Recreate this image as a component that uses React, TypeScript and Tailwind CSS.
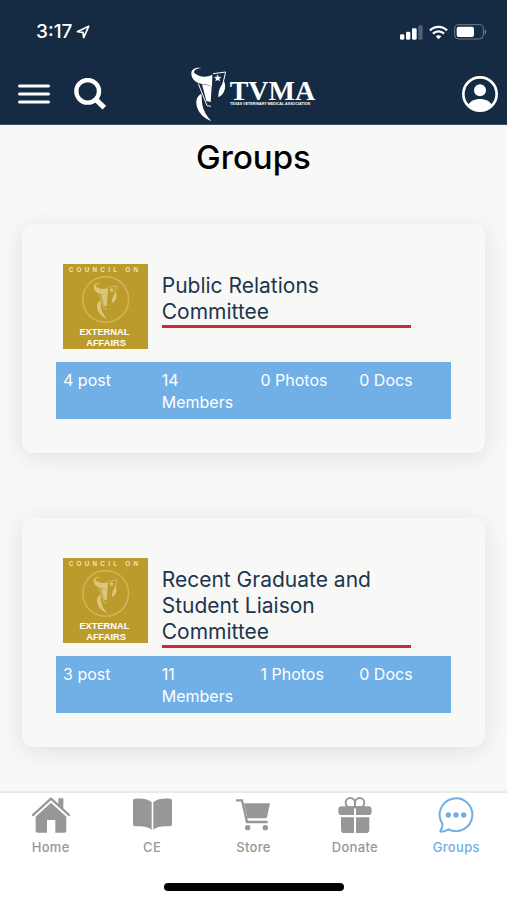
type Group = {
  name: string
  posts: number
  members: number
  photos: number
  docs: number
}

const groups: Group[] = [
  { name: 'Public Relations Committee', posts: 4, members: 14, photos: 0, docs: 0 },
  {
    name: 'Recent Graduate and Student Liaison Committee',
    posts: 3,
    members: 11,
    photos: 1,
    docs: 0,
  },
]

export default function App() {
  return (
    <div className="min-h-screen flex flex-col bg-[#f8f8f7] font-['Inter',sans-serif]">
      <header className="bg-[#152b44] text-white border-b border-[#3b5063]">
        <StatusBar />

        <div className="h-[60px] px-[9px] grid grid-cols-[1fr_auto_1fr] items-center">
          <div className="flex items-center gap-6 pl-[9px]">
            <button aria-label="Menu">
              <svg width="32" height="20" viewBox="0 0 32 20" stroke="currentColor" strokeWidth="3" strokeLinecap="round">
                <path d="M1.500 2h29M1.500 10h29M1.500 18h29" />
              </svg>
            </button>

            <button aria-label="Search">
              <svg width="32" height="32" viewBox="0 0 96 96" fill="none" stroke="currentColor">
                <circle cx="41" cy="40" r="34" strokeWidth="13" />
                <path d="M65 64l26 25" strokeWidth="15" />
              </svg>
            </button>
          </div>

          <a href="#home" aria-label="TVMA home">
            <Logo />
          </a>

          <button aria-label="Profile" className="justify-self-end">
            <svg width="36" height="36" viewBox="0 0 108 108" fill="currentColor">
              <circle cx="54" cy="54" r="50" fill="none" stroke="currentColor" strokeWidth="8" />
              <circle cx="54" cy="43" r="18" />
              <path d="M18 89C23 75 38 69 54 69s31 6 36 20C80 100 68 105 54 105S28 100 18 89z" />
            </svg>
          </button>
        </div>
      </header>

      <main className="flex-1 px-[22px] pb-11">
        <h1 className="pt-3 text-center text-[33px] leading-10 font-medium text-black">
          Groups
        </h1>

        <div className="mt-[47px] flex flex-col gap-[65px]">
          {groups.map((group) => (
            <GroupCard key={group.name} group={group} />
          ))}
        </div>
      </main>

      <nav className="bg-white border-t-2 border-[#e9e9e8] pt-1 text-[#979797]">
        <div className="grid grid-cols-5">
          <Tab label="Home" icon={<HomeIcon />} />
          <Tab label="CE" icon={<BookIcon />} />
          <Tab label="Store" icon={<CartIcon />} />
          <Tab label="Donate" icon={<GiftIcon />} />
          <Tab label="Groups" icon={<ChatIcon />} active />
        </div>

        <div className="mx-auto mt-[26px] mb-[9px] h-2 w-[180px] rounded-full bg-black" />
      </nav>
    </div>
  )
}

function StatusBar() {
  return (
    <div className="h-16 pl-9 pr-5 flex items-center justify-between">
      <div className="flex items-center gap-1">
        <span className="text-[19px] leading-6 font-medium">3:17</span>

        <svg width="14" height="14" viewBox="0 0 42 42" fill="none" stroke="currentColor" strokeWidth="5" strokeLinejoin="round">
          <path d="M38 4L4 20l17 2 2 16z" />
        </svg>
      </div>

      <div className="flex items-center gap-[6px]">
        <svg width="23" height="15" viewBox="0 0 69 45" fill="currentColor">
          <rect x="0" y="28" width="13" height="16" rx="4" />
          <rect x="18" y="20" width="13" height="24" rx="4" />
          <rect x="36" y="10" width="14" height="34" rx="4" />
          <rect x="55" y="1" width="13" height="43" rx="4" opacity="0.25" />
        </svg>

        <svg width="19" height="15" viewBox="0 0 57 45" fill="none" stroke="currentColor" strokeWidth="7">
          <path d="M3 16C17 2 40 2 54 16" />
          <path d="M12 26c9-9 24-9 33 0" />
          <path d="M20 34c5-4 12-4 17 0l-8.500 9z" fill="currentColor" stroke="none" />
        </svg>

        <svg width="33" height="16" viewBox="0 0 99 48" fill="none">
          <rect x="2" y="2" width="86" height="43" rx="12" stroke="#6f7d8c" strokeWidth="3" />
          <rect x="8" y="8" width="52" height="31" rx="6" fill="currentColor" />
          <path d="M92 16c6 3 6 13 0 16z" fill="#6f7d8c" />
        </svg>
      </div>
    </div>
  )
}

function GroupCard({ group }: { group: Group }) {
  return (
    <section className="rounded-xl bg-[#f8f9f7] px-[34px] pt-10 pb-[34px] shadow-[0_4px_24px_rgba(0,0,0,0.1)]">
      <div className="grid grid-cols-12 min-h-[98px]">
        <div className="col-span-3 px-[7px]">
          <CouncilBadge />
        </div>

        <div className="col-span-8 px-[7px] pt-[9px]">
          <h2 className="border-b-3 border-[#c92c35] text-[21px] leading-[26px] text-[#20354d]">
            {group.name}
          </h2>
        </div>
      </div>

      <ul className="grid grid-cols-4 bg-[#71afe7] pt-[7px] pb-[6px] text-base leading-[22px] text-white">
        <li className="px-[7px]">{group.posts} post</li>
        <li className="px-[7px]">
          {group.members}
          <br />
          Members
        </li>
        <li className="pl-[7px] whitespace-nowrap">{group.photos} Photos</li>
        <li className="px-[7px]">{group.docs} Docs</li>
      </ul>
    </section>
  )
}

function CouncilBadge() {
  return (
    <svg viewBox="0 0 256 256" className="block w-full bg-[#bc9b2d] font-['Liberation_Sans',sans-serif]">
      <text x="17" y="23" fontSize="19" fontWeight="bold" letterSpacing="10" fill="#eee3b9">
        COUNCIL ON
      </text>
      <circle cx="129" cy="107" r="69" fill="none" stroke="#cfb355" strokeWidth="5" />
      <g transform="translate(92 56) scale(0.680)" className="text-[#dac77c]">
        <Emblem />
      </g>
      <text x="125" y="213" fontSize="28" fontWeight="bold" textAnchor="middle" fill="#fff">
        EXTERNAL
      </text>
      <text x="130" y="247" fontSize="28" fontWeight="bold" textAnchor="middle" fill="#fff">
        AFFAIRS
      </text>
    </svg>
  )
}

// horn, cup and tail of the association mark, drawn in a 108 x 162 box
function Emblem() {
  return (
    <g fill="currentColor">
      <path d="M31 3C12 0 0 8 1 20c1 16 13 26 29 30 13 3 25 3 33 8l1-35C48 32 24 31 10 18 6 12 14 5 31 3z" />
      <path d="M33 52l29 5-3 48-13-3z" />
      <path d="M22 50l26 66 12 2" fill="none" stroke="currentColor" strokeWidth="3" />
      <path d="M31 80C14 90 12 108 22 130c9 17 23 27 39 32-14-15-24-32-27-49-2-12-1-22-3-33z" />
      <path d="M66 20l38-5-10 42" fill="none" stroke="currentColor" strokeWidth="3" />
      <path d="M99 42c8 17 2 41-17 49 0-13 2-23 7-32 3-6 7-9 10-17z" />
      <path d="M80 22l3 7 8 1-6 5 2 8-7-4-7 4 2-8-6-5 8-1z" />
    </g>
  )
}

function Logo() {
  return (
    <svg width="126" height="54" viewBox="0 0 378 162" fill="currentColor" className="block">
      <Emblem />
      <text x="116" y="99" fontSize="84" fontWeight="bold" fontFamily="'Liberation Serif', serif">
        TVMA
      </text>
      <text x="117" y="115" fontSize="11" fontWeight="bold" fontFamily="'Liberation Sans', sans-serif">
        TEXAS VETERINARY MEDICAL ASSOCIATION
      </text>
    </svg>
  )
}

function Tab({
  label,
  icon,
  active,
}: {
  label: string
  icon: React.ReactNode
  active?: boolean
}) {
  return (
    <a
      href={`#${label.toLowerCase()}`}
      aria-current={active ? 'page' : undefined}
      className={`flex flex-col items-center gap-1 ${active ? 'text-[#70afe4]' : ''}`}
    >
      {icon}
      <span className="text-[13px] leading-5 font-medium tracking-wide">{label}</span>
    </a>
  )
}

function HomeIcon() {
  return (
    <svg width="38" height="36" viewBox="0 0 114 108" fill="currentColor">
      <path d="M79 4h15v31L79 21z" />
      <path d="M3 54L57 5l54 49" fill="none" stroke="currentColor" strokeWidth="7" strokeLinecap="round" strokeLinejoin="round" />
      <path d="M57 17l46 42v42q0 6-6 6H70V69H45v38H17q-6 0-6-6V59z" />
    </svg>
  )
}

function BookIcon() {
  return (
    <svg width="39" height="36" viewBox="0 0 117 108" fill="currentColor">
      <path d="M6 5c20-2 38 1 50 10v84C46 89 29 88 6 88q-6 0-6-6V11q0-6 6-6z" />
      <path d="M111 5c-20-2-38 1-50 10v84c10-10 27-11 50-11q6 0 6-6V11q0-6-6-6z" />
    </svg>
  )
}

function CartIcon() {
  return (
    <svg width="34" height="36" viewBox="0 0 102 108" fill="currentColor">
      <path d="M0 10h18l15 65h62" fill="none" stroke="currentColor" strokeWidth="7" />
      <path d="M24 19h78l-9 42q-1 3-4 3H34z" />
      <circle cx="35" cy="92" r="8" />
      <circle cx="88" cy="92" r="8" />
    </svg>
  )
}

function GiftIcon() {
  return (
    <svg width="34" height="36" viewBox="0 0 102 108" fill="currentColor">
      <g fill="none" stroke="currentColor" strokeWidth="6">
        <path d="M51 31V17a14 14 0 1 0-14 14z" />
        <path d="M51 31V17a14 14 0 1 1 14 14z" />
      </g>
      <path d="M11 28h37v26H11Q1 54 1 44v-6q0-10 10-10zM54 28h37q10 0 10 10v6q0 10-10 10H54z" />
      <path d="M9 61h39v47H19q-10 0-10-10zM54 61h40v37q0 10-10 10H54z" />
    </svg>
  )
}

function ChatIcon() {
  return (
    <svg width="36" height="36" viewBox="0 0 108 108" fill="currentColor">
      <path
        d="M13 80A49 49 0 1 1 32 97C25 101 17 104 9 104c-2 0-3-2-1-4 4-6 6-13 5-20z"
        fill="none"
        stroke="currentColor"
        strokeWidth="6"
        strokeLinejoin="round"
      />
      <circle cx="31" cy="54" r="8" />
      <circle cx="54" cy="54" r="8" />
      <circle cx="77" cy="54" r="8" />
    </svg>
  )
}
